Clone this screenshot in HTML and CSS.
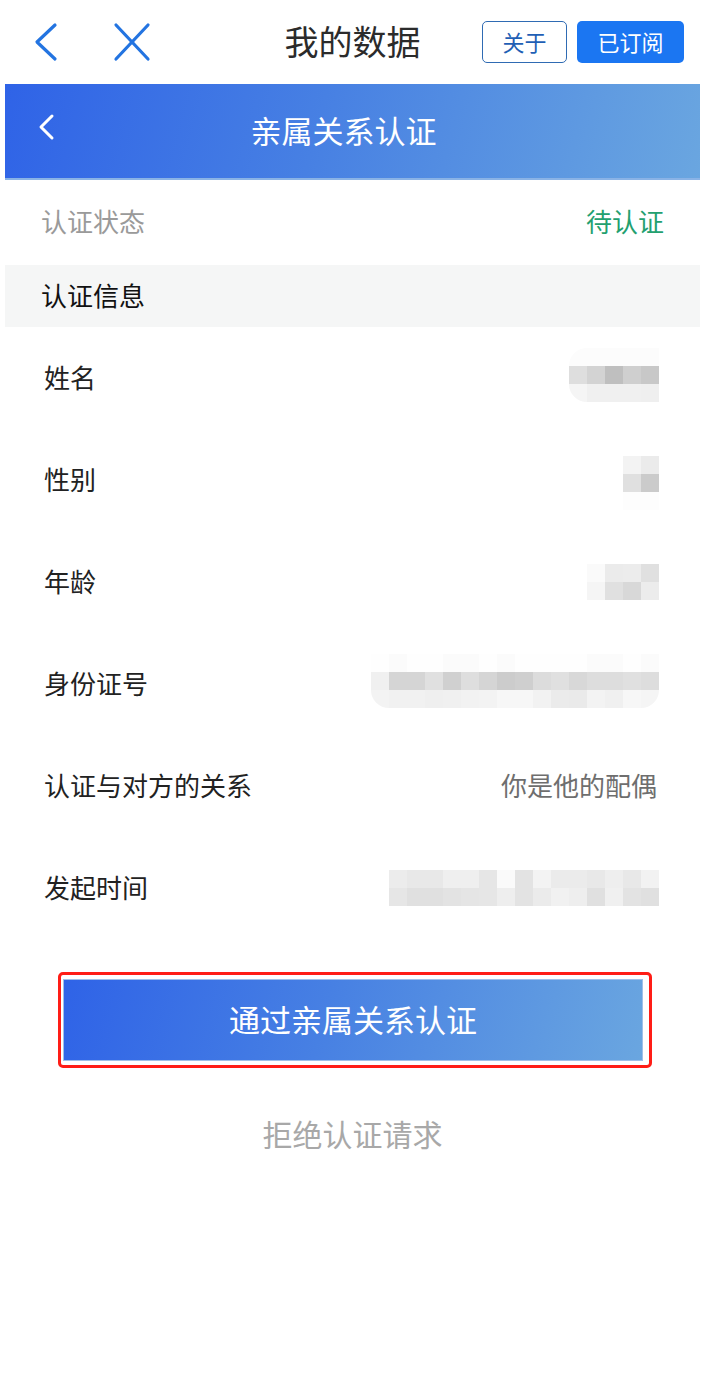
FILE: index.html
```html
<!DOCTYPE html>
<html lang="zh-CN">
<head>
    <meta charset="UTF-8">
    <meta name="viewport" content="width=device-width, initial-scale=1.0">
    <title>我的数据</title>
    <link rel="stylesheet" href="styles.css">
</head>
<body>
    <!-- Top bar -->
    <div class="topbar">
        <div class="topbar-left">
            <svg class="nav-icon" width="30" height="40" viewBox="0 0 30 40">
                <polyline points="23,3 5,20 23,37" fill="none" stroke="#2374e1" stroke-width="3.2" stroke-linecap="round" stroke-linejoin="round"/>
            </svg>
            <svg class="nav-icon close" width="40" height="40" viewBox="0 0 40 40">
                <line x1="4" y1="3" x2="36" y2="37" stroke="#2374e1" stroke-width="3.2" stroke-linecap="round"/>
                <line x1="36" y1="3" x2="4" y2="37" stroke="#2374e1" stroke-width="3.2" stroke-linecap="round"/>
            </svg>
        </div>
        <div class="topbar-title">我的数据</div>
        <div class="topbar-right">
            <button class="btn-outline">关于</button>
            <button class="btn-solid">已订阅</button>
        </div>
    </div>

    <!-- Page header -->
    <div class="page-header">
        <div class="header-left">
            <svg width="20" height="30" viewBox="0 0 20 30">
                <polyline points="15,4 4,15 15,26" fill="none" stroke="#fff" stroke-width="3" stroke-linecap="round" stroke-linejoin="round"/>
            </svg>
        </div>
        <div class="header-title">亲属关系认证</div>
        <div></div>
    </div>

    <div class="status-row">
        <span class="status-label">认证状态</span>
        <span class="status-value">待认证</span>
    </div>

    <div class="section-title">认证信息</div>

    <div class="info-list">
        <div class="info-row">
            <span class="info-label">姓名</span>
            <div class="mosaic mosaic-name" data-cols="5" data-colors="#fcfcfc,#fcfcfc,#fcfcfc,#fcfcfc,#fcfcfc,#dedede,#d3d3d3,#bfbfbf,#cfcfcf,#c8c8c8,#f5f5f5,#f0f0f0,#f0f0f0,#f0f0f0,#efefef"></div>
        </div>
        <div class="info-row">
            <span class="info-label">性别</span>
            <div class="mosaic mosaic-gender" data-cols="2" data-colors="#f3f3f3,#ebebeb,#e0e0e0,#cbcbcb,#fdfdfd,#fdfdfd"></div>
        </div>
        <div class="info-row">
            <span class="info-label">年龄</span>
            <div class="mosaic mosaic-age" data-cols="4" data-colors="#fafafa,#ebebeb,#ececec,#e0e0e0,#f5f5f5,#e0e0e0,#d8d8d8,#ececec"></div>
        </div>
        <div class="info-row">
            <span class="info-label">身份证号</span>
            <div class="mosaic mosaic-id" data-cols="16" data-colors="#fefefe,#fbfbfb,#fefefe,#fefefe,#fbfbfb,#fbfbfb,#fefefe,#fbfbfb,#fefefe,#fefefe,#fefefe,#fefefe,#fbfbfb,#fbfbfb,#fefefe,#fbfbfb,#f0f0f0,#d5d5d5,#d5d5d5,#e0e0e0,#d0d0d0,#dedede,#d5d5d5,#cccccc,#cfcfcf,#dcdcdc,#e0e0e0,#d8d8d8,#dddddd,#dddddd,#e0e0e0,#dddddd,#f3f3f3,#f1f1f1,#f1f1f1,#efefef,#f0f0f0,#f2f2f2,#f3f3f3,#f7f7f7,#f7f7f7,#f2f2f2,#ebebeb,#eaeaea,#f3f3f3,#f0f0f0,#f7f7f7,#f5f5f5"></div>
        </div>
        <div class="info-row">
            <span class="info-label">认证与对方的关系</span>
            <span class="info-value">你是他的配偶</span>
        </div>
        <div class="info-row">
            <span class="info-label">发起时间</span>
            <div class="mosaic mosaic-time" data-cols="15" data-colors="#ececec,#e8e8e8,#e8e8e8,#efefef,#efefef,#e6e6e6,#fafafa,#e3e3e3,#f3f3f3,#ebebeb,#ebebeb,#e8e8e8,#eeeeee,#e8e8e8,#f2f2f2,#e6e6e6,#e0e0e0,#e0e0e0,#e3e3e3,#e5e5e5,#e6e6e6,#eeeeee,#e3e3e3,#ebebeb,#f1f1f1,#eeeeee,#e0e0e0,#f0f0f0,#e3e3e3,#e0e0e0"></div>
        </div>
    </div>

    <div class="action-frame">
        <button class="btn-approve">通过亲属关系认证</button>
    </div>

    <div class="reject-link">拒绝认证请求</div>

    <script>
        // Build the blurred (mosaic) value blocks
        document.querySelectorAll(".mosaic").forEach(function(box) {
            const cols = parseInt(box.dataset.cols, 10);
            const colors = box.dataset.colors.split(",");
            box.style.gridTemplateColumns = "repeat(" + cols + ", 18px)";
            colors.forEach(function(color) {
                const cell = document.createElement("span");
                cell.style.background = color;
                box.appendChild(cell);
            });
        });
    </script>
</body>
</html>
```

FILE: styles.css
```css
body {
    margin: 0;
    padding: 0;
    background: #fff;
    font-family: "Noto Sans CJK SC", "Noto Sans", sans-serif;
    color: #222;
}

/* Top bar */
.topbar {
    height: 84px;
    display: grid;
    grid-template-columns: 1fr auto 1fr;
    align-items: center;
}

.topbar-left {
    display: flex;
    align-items: center;
    padding-left: 32px;
    gap: 50px;
}

.nav-icon {
    display: block;
}

.topbar-title {
    font-size: 34px;
    color: #2b2b2b;
    margin-top: -4px;
}

.topbar-right {
    display: flex;
    justify-content: flex-end;
    gap: 10px;
    padding-right: 21px;
}

.topbar-right button {
    height: 42px;
    border-radius: 5px;
    font-family: inherit;
    font-size: 22px;
    padding: 0 0 3px;
    cursor: pointer;
}

.btn-outline {
    width: 85px;
    background: #fff;
    border: 1.5px solid #2f6bb3;
    color: #1f5fb5;
}

.btn-solid {
    width: 107px;
    background: #1b76f2;
    border: none;
    color: #fff;
}

/* Page header */
.page-header {
    margin: 0 5px;
    height: 96px;
    display: grid;
    grid-template-columns: 1fr auto 1fr;
    align-items: center;
    background: linear-gradient(105deg, #2f63e7 0%, #4780e3 45%, #6aa6e0 100%);
    border-bottom: 2px solid #8ab3e6;
    box-sizing: border-box;
}

.header-left {
    padding-left: 32px;
    padding-bottom: 8px;
}

.header-left svg {
    display: block;
}

.header-title {
    font-size: 31px;
    color: #fff;
    margin-left: -18px;
    padding-bottom: 4px;
}

/* Status */
.status-row {
    margin: 0 5px;
    height: 85px;
    display: flex;
    align-items: center;
    justify-content: space-between;
    padding: 0 36px 4px;
    box-sizing: border-box;
    font-size: 26px;
}

.status-label {
    color: #9a9a9a;
}

.status-value {
    color: #23a06f;
}

.section-title {
    margin: 0 5px;
    height: 62px;
    display: flex;
    align-items: center;
    padding: 0 0 4px 36px;
    box-sizing: border-box;
    background: #f5f6f6;
    font-size: 26px;
    color: #111;
}

/* Info list */
.info-list {
    margin: 0 5px;
}

.info-row {
    height: 102px;
    display: flex;
    align-items: center;
    justify-content: space-between;
    padding: 0 41px 4px 39px;
    box-sizing: border-box;
}

.info-label {
    font-size: 26px;
    color: #222;
}

.info-value {
    font-size: 26px;
    color: #6e6e6e;
    margin-right: 2px;
}

.mosaic {
    display: grid;
    grid-auto-rows: 18px;
    overflow: hidden;
}

.mosaic-name {
    margin-top: -2px;
    border-radius: 18px 0 0 18px;
}

.mosaic-gender {
    margin-top: 10px;
}

.mosaic-age,
.mosaic-time {
    margin-top: 4px;
}

.mosaic-id {
    margin-top: -2px;
    border-radius: 0 0 18px 18px;
}

/* Actions */
.action-frame {
    width: 594px;
    height: 96px;
    margin: 33px 0 0 58px;
    border: 3px solid #ff1d16;
    border-radius: 5px;
    box-sizing: border-box;
    padding: 4px 6px 4px 2px;
}

.btn-approve {
    display: block;
    width: 100%;
    height: 100%;
    border: 1.5px solid #9fc0e8;
    background: linear-gradient(105deg, #2f63e7 0%, #4780e3 45%, #6aa6e0 100%);
    color: #fff;
    font-family: inherit;
    font-size: 31px;
    padding: 0 0 4px;
    cursor: pointer;
}

.reject-link {
    margin-top: 44px;
    text-align: center;
    font-size: 30px;
    line-height: 42px;
    color: #a8a8a8;
}
```
